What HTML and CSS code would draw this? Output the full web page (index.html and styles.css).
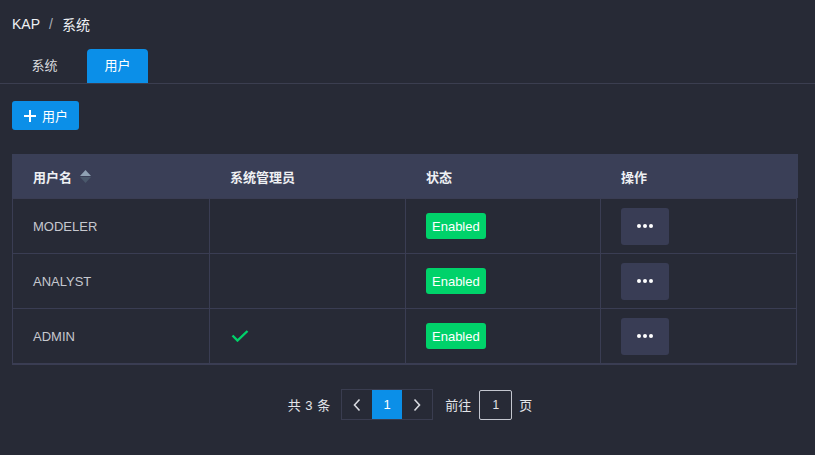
FILE: index.html
```html
<!DOCTYPE html>
<html lang="zh">
<head>
<meta charset="utf-8">
<link rel="stylesheet" href="styles.css">
</head>
<body>
<div class="page">
  <div class="breadcrumb"><span>KAP</span><span class="sep">/</span><span>系统</span></div>
  <div class="tabs">
    <div class="tab">系统</div>
    <div class="tab active">用户</div>
  </div>
  <div class="toolbar">
    <button class="btn-add"><svg class="plus" width="12" height="12" viewBox="0 0 12 12"><path d="M6 0v12M0 6h12" stroke="#fff" stroke-width="2"/></svg><span>用户</span></button>
  </div>
  <div class="table">
    <div class="row head">
      <div class="cell">用户名<span class="sort"><svg width="11" height="13" viewBox="0 0 11 13"><path d="M5.5 0L11 6H0z" fill="#8fa1b3"/><path d="M0 7h11L5.5 13z" fill="#4a586b"/></svg></span></div>
      <div class="cell">系统管理员</div>
      <div class="cell">状态</div>
      <div class="cell">操作</div>
    </div>
    <div class="row">
      <div class="cell">MODELER</div>
      <div class="cell"></div>
      <div class="cell"><span class="tag">Enabled</span></div>
      <div class="cell"><button class="more"><i></i><i></i><i></i></button></div>
    </div>
    <div class="row">
      <div class="cell">ANALYST</div>
      <div class="cell"></div>
      <div class="cell"><span class="tag">Enabled</span></div>
      <div class="cell"><button class="more"><i></i><i></i><i></i></button></div>
    </div>
    <div class="row">
      <div class="cell">ADMIN</div>
      <div class="cell"><svg class="check" width="18" height="12" viewBox="0 0 18 12"><path d="M1.5 5.5l5 5L16.5 1" fill="none" stroke="#00d26a" stroke-width="2.4"/></svg></div>
      <div class="cell"><span class="tag">Enabled</span></div>
      <div class="cell"><button class="more"><i></i><i></i><i></i></button></div>
    </div>
  </div>
  <div class="pager">
    <span class="total">共 3 条</span>
    <div class="pages">
      <span class="pbtn"><svg width="10" height="14" viewBox="0 0 10 14"><path d="M7.5 1.5L2.5 7l5 5.5" fill="none" stroke="#d8dae0" stroke-width="1.6"/></svg></span>
      <span class="pbtn current">1</span>
      <span class="pbtn"><svg width="10" height="14" viewBox="0 0 10 14"><path d="M2.5 1.5L7.5 7l-5 5.5" fill="none" stroke="#d8dae0" stroke-width="1.6"/></svg></span>
    </div>
    <span class="goto">前往</span>
    <span class="jump">1</span>
    <span class="unit">页</span>
  </div>
</div>
</body>
</html>
```
FILE: styles.css
```css
* { box-sizing: border-box; }
html, body { margin: 0; padding: 0; }
body {
  background: #272a36;
  color: #e6e7ea;
  font-family: "Liberation Sans", "Noto Sans CJK SC", sans-serif;
  font-size: 13px;
  width: 815px;
  height: 455px;
  overflow: hidden;
}
.page { display: flex; flex-direction: column; }
.breadcrumb {
  display: flex;
  align-items: center;
  height: 49px;
  padding: 0 12px 1px;
  font-size: 14px;
  color: #eef0f3;
}
.breadcrumb .sep { margin: 0 9px; color: #a9adb8; }
.tabs {
  display: flex;
  gap: 12px;
  height: 35px;
  padding-left: 14px;
  border-bottom: 1px solid #3b3e50;
}
.tab {
  width: 61px;
  display: flex;
  align-items: center;
  justify-content: center;
  padding-bottom: 3px;
  color: #d8dadf;
  font-size: 13px;
  border-radius: 4px 4px 0 0;
}
.tab.active { background: #0b8fe8; color: #fff; }
.toolbar { padding: 17px 12px 0; display: flex; }
.btn-add {
  width: 67px;
  height: 29px;
  border: 0;
  border-radius: 3px;
  background: #0b8fe8;
  color: #fff;
  font: inherit;
  font-size: 13px;
  display: flex;
  align-items: center;
  justify-content: center;
  gap: 6px;
  padding: 0 0 0 1px;
}
.table {
  margin: 24px 18px 0 12px;
  border: 1px solid #3a3d53;
  border-top: 0;
  border-bottom-width: 2px;
}
.row { display: grid; grid-template-columns: 196px 196px 195px 1fr; height: 55px; border-top: 1px solid #3a3d53; }
.row.head { height: 44px; background: #3a3f57; border-top: 0; margin: 0 -2px 0 -1px; padding-left: 1px; font-weight: bold; color: #f0f1f4; }
.cell {
  display: flex;
  align-items: center;
  padding-left: 20px;
  border-left: 1px solid #3a3d53;
  color: #c6c8cf;
}
.cell:first-child { border-left: 0; }
.head .cell { border-left: 0; color: #eef0f3; }
.head .cell:nth-child(2) { padding-left: 21px; }
.head .cell:nth-child(3) { padding-left: 21px; }
.head .cell:nth-child(4) { padding-left: 21px; }
.sort { display: inline-flex; margin-left: 8px; margin-top: 1px; }
.tag {
  display: inline-flex;
  align-items: center;
  height: 26px;
  padding: 0 6px;
  background: #00d26a;
  color: #fff;
  border-radius: 3px;
  font-size: 13px;
}
.more {
  width: 48px;
  height: 37px;
  border: 0;
  border-radius: 3px;
  background: #393d55;
  display: flex;
  align-items: center;
  justify-content: center;
  gap: 2px;
  padding: 0;
}
.more i { width: 4px; height: 4px; border-radius: 50%; background: #fff; display: block; }
.check { margin-left: 1px; }
.pager {
  display: flex;
  align-items: center;
  justify-content: center;
  margin-top: 24px;
  height: 31px;
  padding-left: 5px;
  color: #e3e5ea;
  font-size: 13px;
}
.total { margin-right: 11px; word-spacing: 1px; }
.pages { display: flex; border: 1px solid #3a3d50; height: 31px; }
.pbtn { width: 30px; display: flex; align-items: center; justify-content: center; color: #fff; }
.pbtn.current { background: #0b8fe8; }
.goto { margin-left: 12px; }
.jump {
  margin-left: 8px;
  width: 33px;
  height: 30px;
  border: 1px solid #c3c6cf;
  border-radius: 2px;
  display: flex;
  align-items: center;
  justify-content: center;
  font-size: 12px;
}
.unit { margin-left: 7px; }
```
